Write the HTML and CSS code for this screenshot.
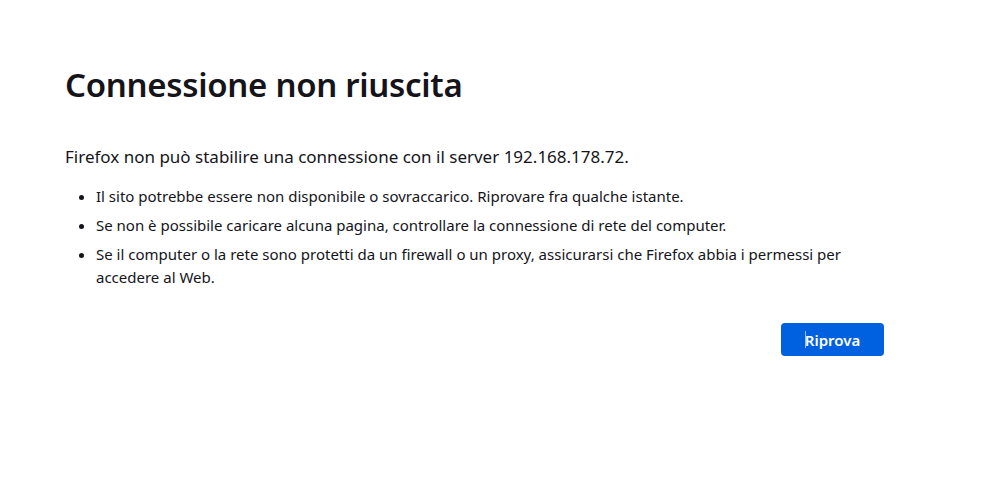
FILE: index.html
```html
<!DOCTYPE html>
<html lang="it">
<head>
<meta charset="utf-8">
<title>Problema di caricamento pagina</title>
<link rel="stylesheet" href="styles.css">
</head>
<body>
<div class="container">
	<h1 class="title">Connessione non riuscita</h1>
	<p class="intro">Firefox non può stabilire una connessione con il server 192.168.178.72.</p>
	<ul class="desc">
		<li>Il sito potrebbe essere non disponibile o sovraccarico. Riprovare fra qualche istante.</li>
		<li>Se non è possibile caricare alcuna pagina, controllare la connessione di rete del computer.</li>
		<li>Se il computer o la rete sono protetti da un firewall o un proxy, assicurarsi che Firefox abbia i permessi per accedere al Web.</li>
	</ul>
	<div class="actions">
		<button class="btn"><span class="caret"></span>Riprova</button>
	</div>
</div>
</body>
</html>
```

FILE: styles.css
```css
*{margin:0;padding:0;box-sizing:border-box;}
body{background:#fff;color:#15141a;font-family:"Noto Sans","Open Sans",sans-serif;}
.container{width:884px;padding:62px 0 0 65px;display:flex;flex-direction:column;}
.title{font-size:33px;font-weight:600;line-height:46px;letter-spacing:-0.3px;}
.intro{margin-top:37px;font-size:17px;line-height:24px;}
.desc{margin-top:16px;padding-left:31px;font-size:15px;line-height:23px;}
.desc li{margin-bottom:6px;}
.actions{display:flex;justify-content:flex-end;margin-top:28px;}
.btn{position:relative;width:103px;height:33px;border:none;border-radius:4px;background:#0061e0;color:#fff;font-family:inherit;font-size:15px;font-weight:600;}
.caret{position:absolute;left:24px;top:8px;width:1px;height:17px;background:#9bc1f5;}
```
